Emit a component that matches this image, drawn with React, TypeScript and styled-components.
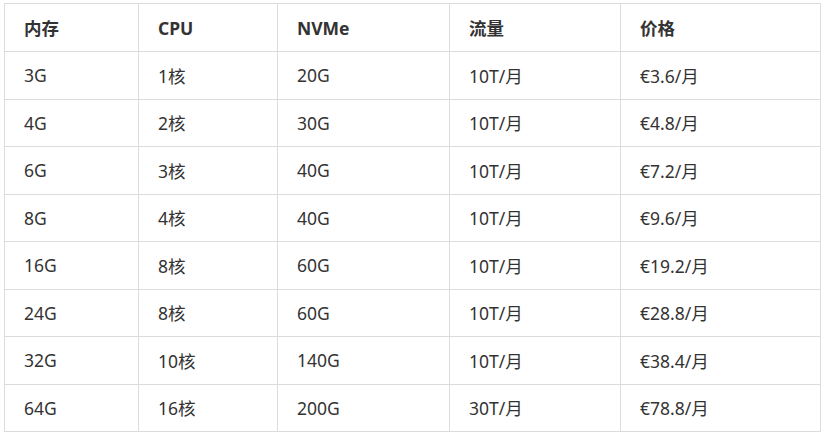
import { createGlobalStyle } from "styled-components";
import styled from "styled-components";

const GlobalStyle = createGlobalStyle`
  html, body {
    margin: 0;
    padding: 0;
    background: #fff;
  }
  body {
    font-family: "Noto Sans", "Noto Sans CJK SC", sans-serif;
    color: #333;
  }
`;

const S = {
  Page: styled.div`
    padding: 3px 0 0 4px;
  `,
  Table: styled.table`
    border-collapse: collapse;
    table-layout: fixed;
    width: 816px;
    font-size: 17.5px;
  `,
  HeadCell: styled.th`
    height: 47px;
    padding: 0 19px;
    border: 1px solid #dcdcdc;
    text-align: left;
    font-weight: 700;
    color: #333;
  `,
  Cell: styled.td`
    height: 46.5px;
    padding: 0 19px;
    border: 1px solid #dcdcdc;
    text-align: left;
    color: #333;
  `,
};

const widths = [134, 139, 172, 171, 200];
const head = ["内存", "CPU", "NVMe", "流量", "价格"];
const rows = [
  ["3G", "1核", "20G", "10T/月", "€3.6/月"],
  ["4G", "2核", "30G", "10T/月", "€4.8/月"],
  ["6G", "3核", "40G", "10T/月", "€7.2/月"],
  ["8G", "4核", "40G", "10T/月", "€9.6/月"],
  ["16G", "8核", "60G", "10T/月", "€19.2/月"],
  ["24G", "8核", "60G", "10T/月", "€28.8/月"],
  ["32G", "10核", "140G", "10T/月", "€38.4/月"],
  ["64G", "16核", "200G", "30T/月", "€78.8/月"],
];

export default function App() {
  return (
    <S.Page>
      <GlobalStyle />
      <S.Table>
        <colgroup>
          {widths.map((w, i) => (
            <col key={i} style={{ width: w }} />
          ))}
        </colgroup>
        <thead>
          <tr>
            {head.map((h) => (
              <S.HeadCell key={h}>{h}</S.HeadCell>
            ))}
          </tr>
        </thead>
        <tbody>
          {rows.map((r, i) => (
            <tr key={i}>
              {r.map((c, j) => (
                <S.Cell key={j}>{c}</S.Cell>
              ))}
            </tr>
          ))}
        </tbody>
      </S.Table>
    </S.Page>
  );
}
